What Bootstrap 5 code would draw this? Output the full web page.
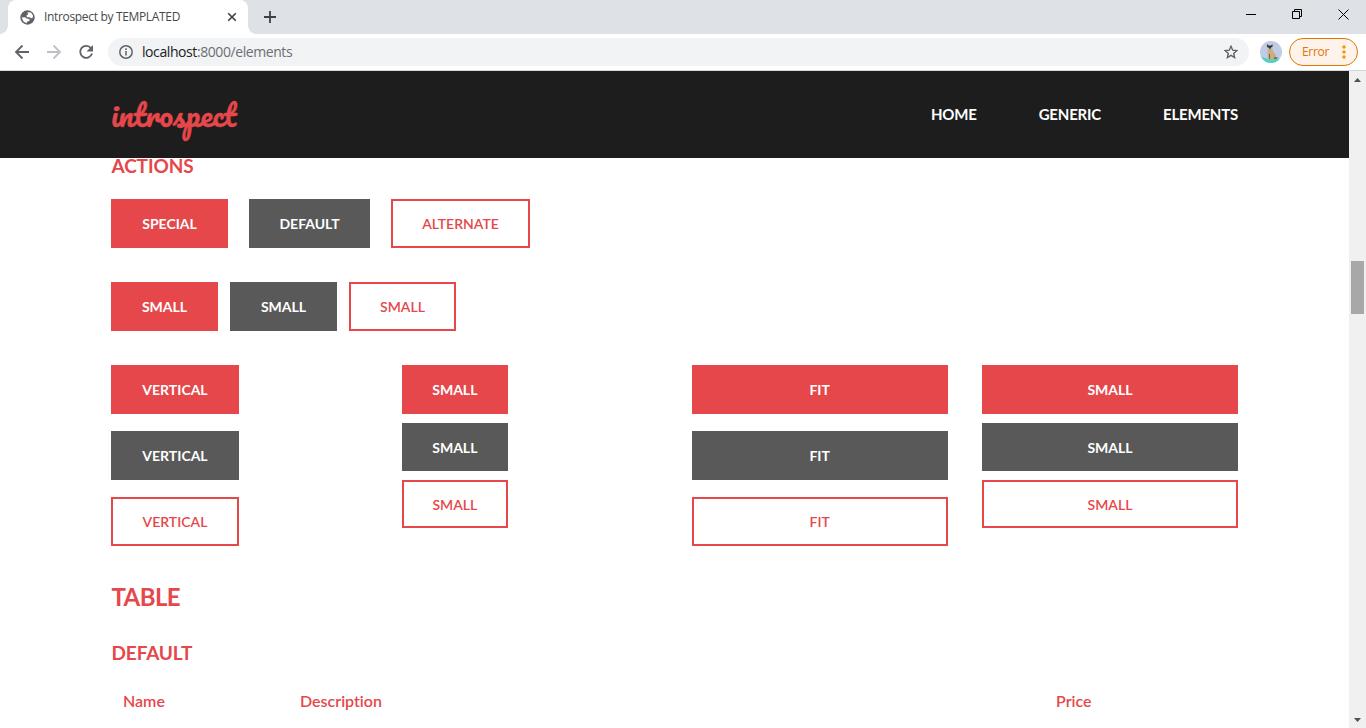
<!DOCTYPE html>
<html lang="en">
<head>
<meta charset="utf-8">
<title>Introspect by TEMPLATED</title>
<link href="https://cdn.jsdelivr.net/npm/bootstrap@5.3.0/dist/css/bootstrap.min.css" rel="stylesheet">
<style>
:root{--red:#e5474b;--gray:#595959;--ink:#1d1d1d}
body{height:728px;overflow:hidden;font-family:Lato,sans-serif;background:#fff}
svg{display:block;flex:none}
.tab-strip{height:34px;background:#dee1e6;padding-left:8px}
.browser-tab{width:240px;height:34px;background:#fff;border-radius:8px 8px 0 0;padding:0 10px 0 12px;font:12px/34px "Open Sans",sans-serif;color:#45494d}
.tab-title{letter-spacing:-.33px;margin-left:9px;white-space:nowrap}
.tab-strip .foot{width:8px;height:8px;align-self:flex-end}
.foot-left{background:radial-gradient(circle at 0 0,#dee1e6 7.5px,#fff 8px);margin-left:-8px}
.foot-right{background:radial-gradient(circle at 100% 0,#dee1e6 7.5px,#fff 8px)}
.toolbar{height:37px;border-bottom:1px solid #d5d7da;padding:0 8px 1px 14px}
.omnibox{width:1141px;height:28px;border-radius:14px;background:#f1f3f4;margin-left:14px;padding:0 11px;font:14px/28px "Open Sans",sans-serif;color:#6b6f74}
.address{letter-spacing:-.42px;margin-left:9px}
.address b{font-weight:400;color:#202124}
.avatar{margin-left:11px}
.error-pill{width:69px;height:28px;border:1px solid #e37400;border-radius:14px;background:#fdf3ea;color:#e37400;font:12px/26px "Open Sans",sans-serif;letter-spacing:-.3px;padding:0 8px 0 12px;margin-left:7px}
.viewport-area{height:657px}
.page-view{width:1349px}
.site-header{height:87px;background:var(--ink);padding:0 111px}
.brand{font:400 30.4px/38px Pacifico,cursive;-webkit-text-stroke:.35px var(--red);color:var(--red);text-decoration:none;padding-bottom:2px}
.site-nav{gap:62px}
.site-nav a{color:#fff;font-size:15px;font-weight:700;letter-spacing:-.2px;text-decoration:none}
.content{padding:0 111px}
h3,h4{color:var(--red);font-weight:700;margin:0;padding-left:.5px}
h4{font-size:19px;line-height:24px;letter-spacing:-.12px}
h3{font-size:24px;line-height:30px;letter-spacing:-.6px}
.act{display:flex;align-items:center;justify-content:center;height:49px;font-size:14px;font-weight:700;color:#fff;text-decoration:none}
.act-red{background:var(--red)}
.act-gray{background:var(--gray)}
.act-line{border:2px solid var(--red);color:var(--red);font-weight:600}
.w-s{width:107px}.w-t{width:106px;margin-left:.5px}.w-v{width:128px}
.columns{display:grid;grid-template-columns:repeat(4,256px);column-gap:34.33px;margin-top:34px}
.stack{gap:17px}
.tight{gap:9px}
.tight .act+.act{height:48px}
.heads{margin-top:26px;color:var(--red);font-size:16px;line-height:20px;font-weight:600;padding-left:12px;font-variant-ligatures:none}
.scroller{width:17px;background:#f0f0f0;padding:7px 0 6px}
.thumb{width:13px;height:53px;background:#a8a8a8;margin-top:179px}
</style>
</head>
<body>
<div class="tab-strip d-flex">
  <i class="foot foot-left"></i>
  <div class="browser-tab d-flex align-items-center">
    <svg width="15" height="15" viewBox="0 0 15 15"><circle cx="7.5" cy="7.5" r="7.2" fill="#5f6368"/><path d="M7.500 2.200 11 2.600 13 5.500 12.600 8 11 8.200 9.500 7.200H7.200L6.300 5.800 8 4.600zM1.600 7.400 5 7.200 6.800 8.600 9.600 9.200 9.400 11 7.200 11.500 6.500 13.200 3.500 11.600z" fill="#fff"/></svg>
    <span class="tab-title">Introspect by TEMPLATED</span>
    <svg class="ms-auto" width="12" height="12" viewBox="0 0 12 12"><path d="m2.200 2.200 7.600 7.600m0-7.600L2.200 9.800" stroke="#3c4043" stroke-width="1.600"/></svg>
  </div>
  <i class="foot foot-right"></i>
  <svg class="ms-2 mt-2" width="12" height="17" viewBox="0 0 12 17"><path d="M6 3v12M0 9h12" stroke="#3c4043" stroke-width="1.800"/></svg>
  <svg class="ms-auto" width="120" height="30" viewBox="0 0 120 30" fill="none" stroke="#000"><path d="M0 14.500h10M46.500 11.500h7v7h-7zM48.500 11.500v-2h7v7h-2M92.500 9.500l10 10m0-10-10 10"/></svg>
</div>
<div class="toolbar d-flex align-items-center">
  <svg width="80" height="16" viewBox="0 0 80 16" fill="none" stroke-width="1.800"><path d="M15 8H2m6.500-6.500L2 8l6.500 6.500" stroke="#5f6368"/><path d="M33 8h13m-6.500-6.500L46 8l-6.500 6.500" stroke="#bdc1c6"/><path d="M77 4.200A6 6 0 1 0 78 9.500" stroke="#5f6368"/><path d="M79 1v6.500h-6.500z" fill="#5f6368"/></svg>
  <div class="omnibox d-flex align-items-center">
    <svg width="14" height="14" viewBox="0 0 14 14" fill="none" stroke="#5f6368" stroke-width="1.500"><circle cx="7" cy="7" r="6.200"/><path d="M7 6v4.500M7 3.300v1.600"/></svg>
    <span class="address"><b>localhost</b>:8000/elements</span>
    <svg class="ms-auto" width="14" height="14" viewBox="0 0 14 14"><path d="m7 1.300 1.700 3.900 4.200.4-3.200 2.800.9 4.100L7 10.300l-3.600 2.200.9-4.100-3.200-2.800 4.200-.4z" fill="none" stroke="#5f6368" stroke-width="1.400"/></svg>
  </div>
  <svg class="avatar" width="22" height="22" viewBox="0 0 22 22"><defs><clipPath id="face"><circle cx="11" cy="11" r="11"/></clipPath></defs><g clip-path="url(#face)"><path fill="#c0cbe7" d="M0 0h22v22H0z"/><path fill="#4fd1c3" d="M0 15.500l8 2.500 14-.5V22H0z"/><path fill="#c9ae80" d="M8 7h4l1.500 4 2.500 3v3l-2 1.500H8L7.500 12z"/><path fill="#d9c7a3" d="M8 4.500h3.500V8H8z"/><path fill="#3b3631" d="M7 3 8.500 4.500H11L12.500 3v3L11 6.500 10 8.500 8.700 6.800 7 6z"/><path fill="#5b5044" d="M9 13h.8v5H9zM14 16.500l4-.2-1.500 1.500H14z"/></g></svg>
  <div class="error-pill d-flex align-items-center justify-content-between"><span>Error</span><svg width="10" height="16" viewBox="0 0 10 16" fill="#f29900"><circle cx="5" cy="3" r="1.700"/><circle cx="5" cy="8" r="1.700"/><circle cx="5" cy="13" r="1.700"/></svg></div>
</div>
<div class="viewport-area d-flex">
  <main class="page-view">
    <header class="site-header d-flex align-items-center justify-content-between">
      <a class="brand" href="#">introspect</a>
      <nav class="site-nav d-flex"><a href="#">HOME</a><a href="#">GENERIC</a><a href="#">ELEMENTS</a></nav>
    </header>
    <div class="content">
      <h4 style="margin-top:-4px">ACTIONS</h4>
      <div class="d-flex" style="gap:21px;margin-top:21px">
        <a class="act act-red" style="width:117px">SPECIAL</a><a class="act act-gray" style="width:121px">DEFAULT</a><a class="act act-line" style="width:139px">ALTERNATE</a>
      </div>
      <div class="d-flex" style="gap:12px;margin-top:34px">
        <a class="act act-red w-s">SMALL</a><a class="act act-gray w-s">SMALL</a><a class="act act-line w-s">SMALL</a>
      </div>
      <div class="columns">
        <div class="stack d-flex flex-column"><a class="act act-red w-v">VERTICAL</a><a class="act act-gray w-v">VERTICAL</a><a class="act act-line w-v">VERTICAL</a></div>
        <div class="stack tight d-flex flex-column"><a class="act act-red w-t">SMALL</a><a class="act act-gray w-t">SMALL</a><a class="act act-line w-t">SMALL</a></div>
        <div class="stack d-flex flex-column"><a class="act act-red">FIT</a><a class="act act-gray">FIT</a><a class="act act-line">FIT</a></div>
        <div class="stack tight d-flex flex-column"><a class="act act-red">SMALL</a><a class="act act-gray">SMALL</a><a class="act act-line">SMALL</a></div>
      </div>
      <h3 style="margin-top:36px">TABLE</h3>
      <h4 style="margin-top:29px">DEFAULT</h4>
      <div class="heads d-flex"><span style="width:177px">Name</span><span style="width:756px">Description</span><span>Price</span></div>
    </div>
  </main>
  <aside class="scroller d-flex flex-column align-items-center">
    <svg width="7" height="4" viewBox="0 0 7 4"><path d="M0 4h7L3.500 0z" fill="#505050"/></svg>
    <div class="thumb"></div>
    <svg class="mt-auto" width="7" height="4" viewBox="0 0 7 4"><path d="M0 0h7L3.500 4z" fill="#505050"/></svg>
  </aside>
</div>
<script src="https://cdn.jsdelivr.net/npm/bootstrap@5.3.0/dist/js/bootstrap.bundle.min.js"></script>
</body>
</html>
